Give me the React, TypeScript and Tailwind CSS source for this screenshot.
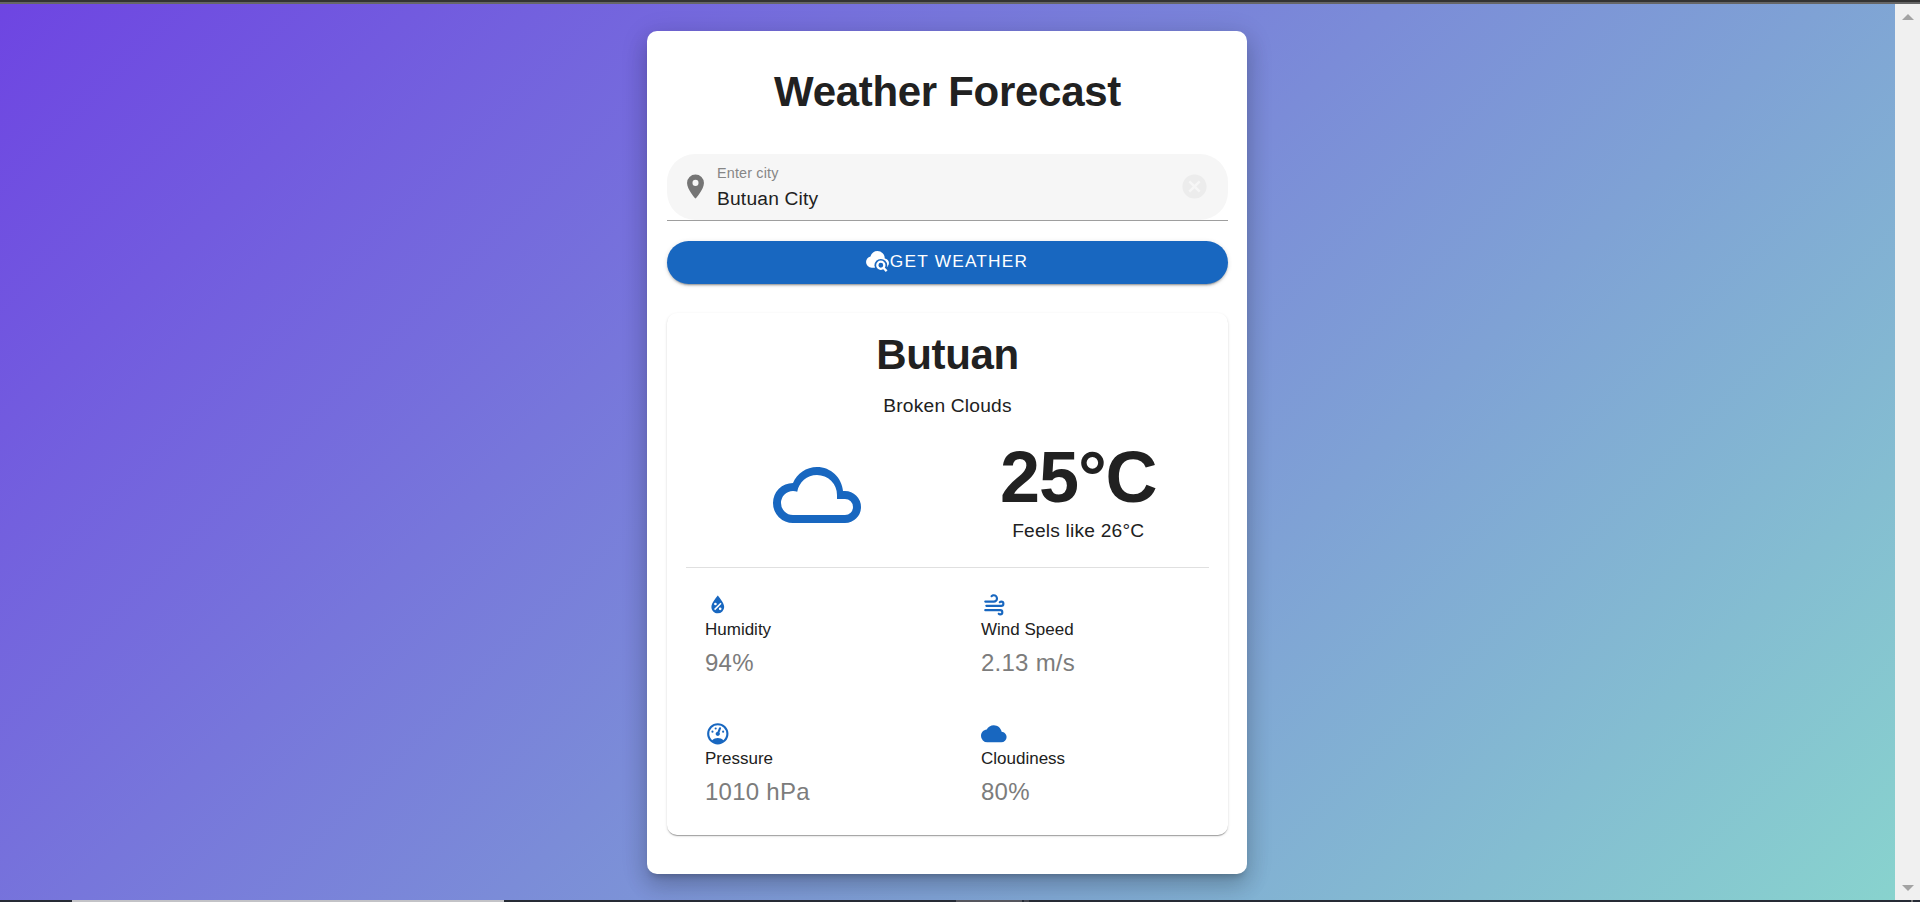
const icons = {
  marker: 'M12,11.5A2.5,2.5 0 0,1 9.5,9A2.5,2.5 0 0,1 12,6.5A2.5,2.5 0 0,1 14.5,9A2.5,2.5 0 0,1 12,11.5M12,2A7,7 0 0,0 5,9C5,14.25 12,22 12,22C12,22 19,14.25 19,9A7,7 0 0,0 12,2Z',
  clear: 'M12,2C17.53,2 22,6.47 22,12C22,17.53 17.53,22 12,22C6.47,22 2,17.53 2,12C2,6.47 6.47,2 12,2M15.59,7L12,10.59L8.41,7L7,8.41L10.59,12L7,15.59L8.41,17L12,13.41L15.59,17L17,15.59L13.41,12L17,8.41L15.59,7Z',
  cloudy: 'M6,19A5,5 0 0,1 1,14A5,5 0 0,1 6,9C7,6.65 9.3,5 12,5C15.43,5 18.24,7.66 18.5,11.03L19,11A4,4 0 0,1 23,15A4,4 0 0,1 19,19H6M19,13H17V12A5,5 0 0,0 12,7C9.5,7 7.45,8.82 7.06,11.19C6.73,11.07 6.37,11 6,11A3,3 0 0,0 3,14A3,3 0 0,0 6,17H19A2,2 0 0,0 21,15A2,2 0 0,0 19,13Z',
  humidity: 'M12,3.25C12,3.25 6,10 6,14C6,17.32 8.69,20 12,20A6,6 0 0,0 18,14C18,10 12,3.25 12,3.25M14.47,9.97L15.53,11.03L9.53,17.03L8.47,15.97M9.75,10A1.25,1.25 0 0,1 11,11.25A1.25,1.25 0 0,1 9.75,12.5A1.25,1.25 0 0,1 8.5,11.25A1.25,1.25 0 0,1 9.75,10M14.25,14.5A1.25,1.25 0 0,1 15.5,15.75A1.25,1.25 0 0,1 14.25,17A1.25,1.25 0 0,1 13,15.75A1.25,1.25 0 0,1 14.25,14.5Z',
  wind: 'M4,10A1,1 0 0,1 3,9A1,1 0 0,1 4,8H12A2,2 0 0,0 14,6A2,2 0 0,0 12,4C11.45,4 10.95,4.22 10.59,4.59C10.2,5 9.56,5 9.17,4.59C8.78,4.2 8.78,3.56 9.17,3.17C9.9,2.45 10.9,2 12,2A4,4 0 0,1 16,6A4,4 0 0,1 12,10H4M19,12A1,1 0 0,0 20,11A1,1 0 0,0 19,10C18.72,10 18.47,10.11 18.29,10.29C17.9,10.68 17.27,10.68 16.88,10.29C16.5,9.9 16.5,9.27 16.88,8.88C17.42,8.34 18.17,8 19,8A3,3 0 0,1 22,11A3,3 0 0,1 19,14H5A1,1 0 0,1 4,13A1,1 0 0,1 5,12H19M18,18H4A1,1 0 0,1 3,17A1,1 0 0,1 4,16H18A3,3 0 0,1 21,19A3,3 0 0,1 18,22C17.17,22 16.42,21.66 15.88,21.12C15.5,20.73 15.5,20.1 15.88,19.71C16.27,19.32 16.9,19.32 17.29,19.71C17.47,19.89 17.72,20 18,20A1,1 0 0,0 19,19A1,1 0 0,0 18,18Z',
  gauge: 'M12,2A10,10 0 0,0 2,12A10,10 0 0,0 12,22A10,10 0 0,0 22,12A10,10 0 0,0 12,2M12,4A8,8 0 0,1 20,12C20,14.4 19,16.5 17.3,18C15.9,16.7 14,16 12,16C10,16 8.2,16.7 6.7,18C5,16.5 4,14.4 4,12A8,8 0 0,1 12,4M14,5.89C13.62,5.9 13.26,6.15 13.1,6.54L11.81,9.77L11.71,10C11,10.13 10.41,10.6 10.14,11.26C9.73,12.29 10.23,13.45 11.26,13.86C12.29,14.27 13.45,13.77 13.86,12.74C14.12,12.08 14,11.32 13.57,10.76L13.67,10.5L14.96,7.29L14.97,7.26C15.17,6.75 14.92,6.17 14.41,5.96C14.28,5.91 14.15,5.89 14,5.89M10,6A1,1 0 0,0 9,7A1,1 0 0,0 10,8A1,1 0 0,0 11,7A1,1 0 0,0 10,6M7,9A1,1 0 0,0 6,10A1,1 0 0,0 7,11A1,1 0 0,0 8,10A1,1 0 0,0 7,9M17,9A1,1 0 0,0 16,10A1,1 0 0,0 17,11A1,1 0 0,0 18,10A1,1 0 0,0 17,9Z',
  cloud: 'M19.35,10.03C18.67,6.59 15.64,4 12,4C9.11,4 6.6,5.64 5.35,8.03C2.34,8.36 0,10.9 0,14A6,6 0 0,0 6,20H19A5,5 0 0,0 24,15C24,12.36 21.95,10.22 19.35,10.03Z',
};

function Icon({ path, className }: { path: string; className: string }) {
  return (
    <svg viewBox="0 0 24 24" fill="currentColor" fillRule="evenodd" className={`shrink-0 ${className}`}>
      <path d={path} />
    </svg>
  );
}

function CloudSearchIcon() {
  return (
    <svg viewBox="0 0 24 24" className="size-[25px] shrink-0">
      <path
        d="M6.5 18Q4.22 18 2.61 16.43 1 14.85 1 12.58 1 10.63 2.17 9.1 3.35 7.57 5.25 7.15 5.88 4.85 7.75 3.43 9.63 2 12 2 14.93 2 16.96 4.04 19 6.07 19 9 20.73 9.2 21.86 10.5 23 11.78 23 13.5 23 15.38 21.69 16.69 20.38 18 18.5 18Z"
        fill="#ffffff"
      />
      <circle cx="15.2" cy="15.6" r="6.1" fill="#1867c0" />
      <path d="M16 16L21.5 21.5" fill="none" stroke="#1867c0" strokeWidth="4" />
      <path d="M17.4 17.8L20.8 21.2" fill="none" stroke="#ffffff" strokeWidth="2.2" />
      <circle cx="15.2" cy="15.6" r="3.4" fill="none" stroke="#ffffff" strokeWidth="2.2" />
    </svg>
  );
}

function Metric({ icon, label, value }: { icon: string; label: string; value: string }) {
  return (
    <div className="h-[129px] px-[19px] pt-6">
      <Icon path={icon} className="size-[25.6px] text-[#1867c0]" />
      <div className="mt-[0.4px] h-6 text-[17px] leading-6">{label}</div>
      <div className="mt-[5px] text-[24px] leading-8 tracking-[0.25px] text-[#7c7c7c]">{value}</div>
    </div>
  );
}

export default function App() {
  return (
    <div className="flex h-[902px] w-[1920px] flex-col overflow-hidden font-['Liberation_Sans',Arial,sans-serif] text-[#212121]">
      <div className="h-1 shrink-0 border-b-2 border-[#666666] bg-[#333333]" />
      <div className="flex h-[896px]">
        <main className="flex w-[1895px] justify-center bg-[linear-gradient(135deg,#6e45e2,#88d3ce)] pr-px pt-[27px]">
          <section className="h-[843px] w-[600px] rounded-[10px] bg-white pl-5 pr-[19px] shadow-[0_6px_6px_-4px_rgba(0,0,0,0.2),0_12px_21px_1px_rgba(0,0,0,0.14),0_5px_27px_2px_rgba(0,0,0,0.12)]">
            <h1 className="pt-9 text-center text-[42px] font-bold leading-[50px] tracking-[-0.3px]">Weather Forecast</h1>
            <div className="mt-[37px] flex h-[67px] items-center border-b border-[#9e9e9e]">
              <div className="flex h-[66px] w-full items-center rounded-[28px] bg-[#f6f6f6] pl-[14px] pr-[19px]">
                <Icon path={icons.marker} className="mb-[2px] size-[29px] text-[#757575]" />
                <div className="ml-[7px] flex-1 pt-[2px]">
                  <div className="text-[14.4px] leading-5 tracking-[0.15px] text-[#868686]">Enter city</div>
                  <div className="mt-[2px] text-[19.2px] leading-7 tracking-[0.2px]">Butuan City</div>
                </div>
                <Icon path={icons.clear} className="mb-[2px] size-[29px] text-[#ececec]" />
              </div>
            </div>
            <button className="mt-5 flex h-[43px] w-full items-center justify-center rounded-full bg-[#1867c0] pb-[2px] pr-[2px] text-[17.3px] tracking-[1.2px] text-white shadow-[0_3px_1px_-2px_rgba(0,0,0,0.2),0_2px_2px_0_rgba(0,0,0,0.14),0_1px_5px_0_rgba(0,0,0,0.12)]">
              <CloudSearchIcon />
              GET WEATHER
            </button>
            <div className="mt-[29px] h-[522px] rounded-[10px] px-[19px] shadow-[0_2px_1px_-1px_rgba(0,0,0,0.2),0_1px_1px_0_rgba(0,0,0,0.14),0_1px_3px_0_rgba(0,0,0,0.12)]">
              <h2 className="pt-[17px] text-center text-[42px] font-bold leading-[50px] tracking-[-0.35px]">Butuan</h2>
              <p className="mt-3 text-center text-[19.2px] leading-7 tracking-[0.2px]">Broken Clouds</p>
              <div className="mt-[11px] grid h-[136px] grid-cols-2">
                <div className="flex items-center justify-center pb-[8px]">
                  <Icon path={icons.cloudy} className="size-24 text-[#1867c0]" />
                </div>
                <div className="text-center">
                  <div className="h-[86px] text-[72px] font-bold leading-[92px] tracking-[-1.125px]">25°C</div>
                  <div className="text-[19.2px] leading-7 tracking-[0.2px]">Feels like 26°C</div>
                </div>
              </div>
              <div className="border-t border-[#e0e0e0]" />
              <div className="grid grid-cols-[276px_1fr]">
                <Metric icon={icons.humidity} label="Humidity" value="94%" />
                <Metric icon={icons.wind} label="Wind Speed" value="2.13 m/s" />
                <Metric icon={icons.gauge} label="Pressure" value="1010 hPa" />
                <Metric icon={icons.cloud} label="Cloudiness" value="80%" />
              </div>
            </div>
          </section>
        </main>
        <div className="flex w-[25px] flex-col items-center justify-between bg-[#f0f0f0] pb-[9px] pt-[10px]">
          <svg viewBox="0 0 12 6" className="h-[6px] w-3"><path d="M6 0L12 6H0Z" fill="#a3a3a3" /></svg>
          <svg viewBox="0 0 12 6" className="h-[6px] w-3"><path d="M0 0H12L6 6Z" fill="#a3a3a3" /></svg>
        </div>
      </div>
      <div className="flex h-[2px] bg-[#262b35]">
        <div className="ml-[72px] w-[432px] bg-[#c3c3c7]" />
        <div className="ml-[452px] w-[66px] bg-[#55565e]" />
        <div className="ml-[2px] w-[5px] bg-[#444650]" />
        <div className="ml-[882px] w-[2px] bg-[#777777]" />
      </div>
    </div>
  );
}
